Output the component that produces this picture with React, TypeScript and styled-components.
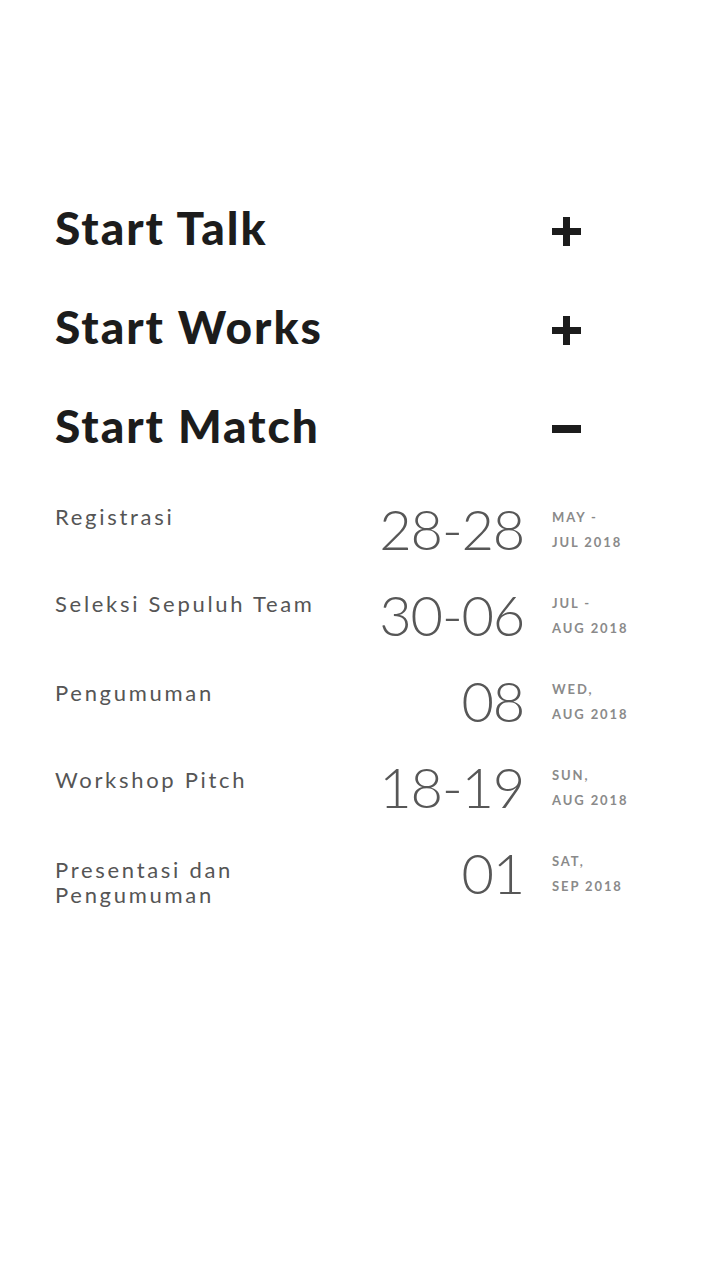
import React from "react";
import styled, { createGlobalStyle } from "styled-components";

const Global = createGlobalStyle`
  html, body { margin: 0; padding: 0; background: #ffffff; }
  body { font-family: Lato, "Open Sans", sans-serif; }
`;

const Page = styled.div`
  width: 720px;
  min-height: 1280px;
  box-sizing: border-box;
  padding: 178px 55px 0 55px;
  background: #fff;
`;

const Accordion = styled.div`
  display: flex;
  flex-direction: column;
`;

const HeadRow = styled.div`
  display: grid;
  grid-template-columns: 1fr 113px;
  align-items: center;
  height: 99px;
`;

const HeadTitle = styled.h2`
  margin: 0;
  font-family: Lato, sans-serif;
  font-weight: 900;
  font-size: 46px;
  line-height: 99px;
  color: #1c1c1c;
  letter-spacing: 2px;
`;

const Toggle = styled.svg`
  display: block;
  width: 29px;
  height: 29px;
  margin-top: 8px;
`;

const Table = styled.div`
  display: flex;
  flex-direction: column;
  padding-top: 26px;
`;

const Row = styled.div`
  display: grid;
  grid-template-columns: 1fr auto 113px;
  column-gap: 28px;
  align-items: start;
  height: 86px;
`;

const Name = styled.div<{ $shift: number }>`
  margin-top: ${(p) => p.$shift}px;
  font-family: Lato, sans-serif;
  font-weight: 400;
  font-size: 22px;
  line-height: 25px;
  letter-spacing: 2.7px;
  color: #555555;
  max-width: 270px;
`;

const Big = styled.div`
  font-family: Lato, sans-serif;
  font-weight: 300;
  font-size: 56px;
  line-height: 56px;
  letter-spacing: -1.2px;
  color: #575757;
  text-align: right;
`;

const When = styled.div`
  margin-top: 4px;
  font-family: Lato, sans-serif;
  font-weight: 700;
  font-size: 13px;
  line-height: 25px;
  letter-spacing: 1.9px;
  color: #8a8a8a;
  text-transform: uppercase;
`;

const Plus = () => (
  <Toggle viewBox="0 0 29 29">
    <rect x="0" y="11" width="29" height="7" fill="#1c1c1c" />
    <rect x="11" y="0" width="7" height="29" fill="#1c1c1c" />
  </Toggle>
);

const Minus = () => (
  <Toggle viewBox="0 0 29 29">
    <rect x="0" y="10" width="29" height="8" fill="#1c1c1c" />
  </Toggle>
);

const heads = [
  { title: "Start Talk", open: false },
  { title: "Start Works", open: false },
  { title: "Start Match", open: true },
];

const schedule = [
  { name: "Registrasi", date: "28-28", l1: "May -", l2: "Jul 2018", shift: 3 },
  { name: "Seleksi Sepuluh Team", date: "30-06", l1: "Jul -", l2: "Aug 2018", shift: 4 },
  { name: "Pengumuman", date: "08", l1: "Wed,", l2: "Aug 2018", shift: 7 },
  { name: "Workshop Pitch", date: "18-19", l1: "Sun,", l2: "Aug 2018", shift: 8 },
  { name: "Presentasi dan Pengumuman", date: "01", l1: "Sat,", l2: "Sep 2018", shift: 12 },
];

export default function App() {
  return (
    <>
      <Global />
      <Page>
        <Accordion>
          {heads.map((h) => (
            <HeadRow key={h.title}>
              <HeadTitle>{h.title}</HeadTitle>
              {h.open ? <Minus /> : <Plus />}
            </HeadRow>
          ))}
        </Accordion>
        <Table>
          {schedule.map((s) => (
            <Row key={s.name}>
              <Name $shift={s.shift}>{s.name}</Name>
              <Big>{s.date}</Big>
              <When>
                {s.l1}
                <br />
                {s.l2}
              </When>
            </Row>
          ))}
        </Table>
      </Page>
    </>
  );
}
